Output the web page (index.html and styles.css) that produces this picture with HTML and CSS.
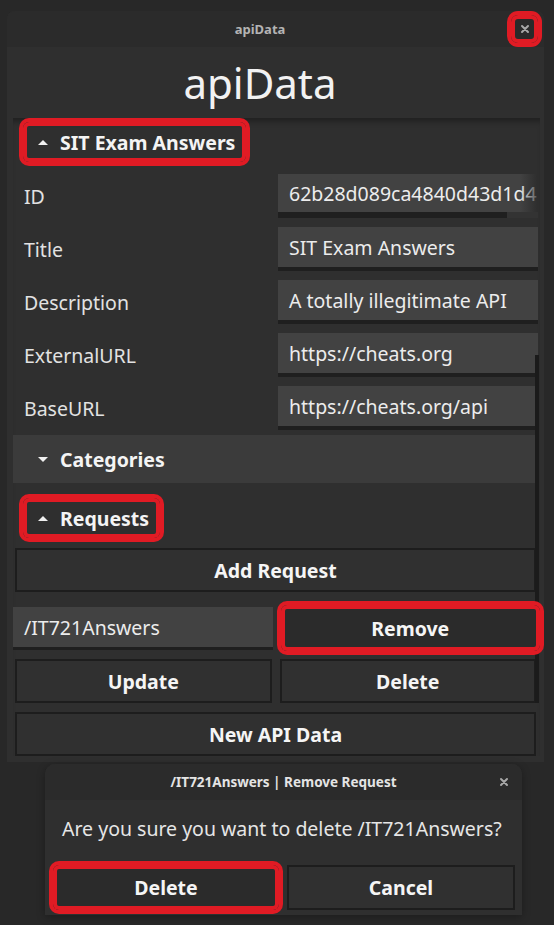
FILE: index.html
```html
<!DOCTYPE html>
<html>
<head>
<meta charset="utf-8">
<title>apiData</title>
<link rel="stylesheet" href="styles.css">
</head>
<body>
<div class="window">
  <div class="titlebar">
    <span class="win-title">apiData</span>
    <span class="close-btn ring-small"><svg width="10" height="10" viewBox="0 0 10 10"><path d="M2 2 L8 8 M8 2 L2 8" stroke="#a8a8a8" stroke-width="2" stroke-linecap="round"/></svg></span>
  </div>
  <div class="content">
    <h1 class="heading">apiData</h1>
    <div class="scroller">
      <div class="section-header">
        <span class="hdr-box ring"><span class="tri up"></span>SIT Exam Answers</span>
      </div>
      <div class="form">
        <div class="label">ID</div>
        <div class="field field-id"><span>62b28d089ca4840d43d1d4</span></div>
        <div class="label">Title</div>
        <div class="field">SIT Exam Answers</div>
        <div class="label">Description</div>
        <div class="field">A totally illegitimate API</div>
        <div class="label">ExternalURL</div>
        <div class="field">https://cheats.org</div>
        <div class="label">BaseURL</div>
        <div class="field">https://cheats.org/api</div>
      </div>
      <div class="section-header hovered">
        <span class="hdr-box"><span class="tri down"></span>Categories</span>
      </div>
      <div class="section-header req-header">
        <span class="hdr-box ring"><span class="tri up"></span>Requests</span>
      </div>
      <div class="actions">
        <div class="btn">Add Request</div>
        <div class="pair pair-edit">
          <div class="field field-req">/IT721Answers</div>
          <div class="btn ring">Remove</div>
        </div>
        <div class="pair pair-btns">
          <div class="btn">Update</div>
          <div class="btn">Delete</div>
        </div>
        <div class="btn btn-last">New API Data</div>
      </div>
      <div class="thumb"></div>
    </div>
  </div>
</div>
<div class="dialog">
  <div class="dlg-titlebar">
    <span></span>
    <span class="dlg-title">/IT721Answers | Remove Request</span>
    <span class="dlg-close"><svg width="10" height="10" viewBox="0 0 10 10"><path d="M2 2 L8 8 M8 2 L2 8" stroke="#a8a8a8" stroke-width="2" stroke-linecap="round"/></svg></span>
  </div>
  <div class="dlg-body">
    <p class="dlg-text">Are you sure you want to delete /IT721Answers?</p>
    <div class="dlg-buttons">
      <div class="btn ring">Delete</div>
      <div class="btn">Cancel</div>
    </div>
  </div>
</div>
</body>
</html>
```
FILE: styles.css
```css
* { box-sizing: border-box; }
html, body { margin: 0; padding: 0; }
body {
  background: #282828;
  font-family: "Noto Sans", "Open Sans", sans-serif;
  color: #e8e8e8;
  width: 554px;
  height: 925px;
  overflow: hidden;
}

.window {
  margin: 11px 0 0 7px;
  width: 537px;
  background: #2f2f2f;
  border-radius: 8px 8px 0 0;
}

.titlebar {
  height: 36px;
  background: #2b2b2b;
  border-radius: 8px 8px 0 0;
  display: flex;
  align-items: center;
}
.win-title {
  flex: 1;
  text-align: center;
  padding-left: 2px;
  font-size: 13px;
  font-weight: 700;
  color: #b4b4b4;
}
.close-btn {
  width: 27px;
  height: 28px;
  margin-right: 6px;
  display: flex;
  align-items: center;
  justify-content: center;
  background: #2a2a2a;
}
.ring-small {
  border-radius: 7px;
  box-shadow: inset 0 0 0 4px #e01b24, 0 0 0 4px #e01b24;
}

.content {
  padding: 0 4px 6px 6px;
}
.heading {
  margin: 0;
  padding: 7px 33px 7px 0;
  font-size: 42px;
  font-weight: 400;
  line-height: 57px;
  text-align: center;
  color: #f2f2f2;
}

.scroller {
  position: relative;
  box-shadow: inset 0 7px 6px -4px rgba(0, 0, 0, 0.35);
}

.section-header {
  height: 48px;
  display: flex;
  align-items: center;
  font-size: 19.5px;
  font-weight: 700;
  color: #f4f4f4;
}
.hdr-box {
  height: 40px;
  margin-left: 10px;
  padding: 0 11px 0 15px;
  display: flex;
  align-items: center;
  gap: 12px;
}
.ring {
  position: relative;
  z-index: 2;
  border-radius: 6px;
  box-shadow: inset 0 0 0 4px #e01b24, 0 0 0 4px #e01b24;
}
.tri {
  width: 0;
  height: 0;
  border-left: 5px solid transparent;
  border-right: 5px solid transparent;
}
.tri.up { border-bottom: 5px solid #f0f0f0; }
.tri.down { border-top: 5px solid #f0f0f0; }

.hovered {
  background: #3b3b3b;
  margin-top: 5px;
  margin-right: 3px;
}
.req-header {
  margin-top: 11px;
}

.form {
  display: grid;
  grid-template-columns: 265px 260px;
  row-gap: 9px;
  margin-top: 8px;
}
.label {
  align-self: center;
  padding-left: 11px;
  font-size: 19.5px;
  color: #e2e2e2;
}
.field {
  height: 44px;
  background: #424242;
  border-bottom: 4px solid #1f1f1f;
  padding: 0 11px;
  display: flex;
  align-items: center;
  font-size: 19.5px;
  color: #ececec;
  white-space: nowrap;
  overflow: hidden;
}
.field-id {
  position: relative;
  border-bottom-width: 6px;
  border-image: linear-gradient(to right, #1f1f1f 88%, #333 88%) 1;
  border-image-slice: 0 0 1 0;
  border-image-width: 0 0 6px 0;
}
.field-id::after {
  content: "";
  position: absolute;
  right: 0;
  top: 0;
  bottom: 0;
  width: 18px;
  background: linear-gradient(to right, rgba(48, 48, 48, 0), rgba(40, 40, 40, 0.8));
}

.actions {
  margin-top: 6px;
  padding: 0 4px 0 2px;
  display: flex;
  flex-direction: column;
}
.btn {
  height: 44px;
  display: flex;
  align-items: center;
  justify-content: center;
  background: #303030;
  border: 2px solid #1d1d1d;
  font-size: 19.5px;
  font-weight: 700;
  color: #f5f5f5;
}
.btn.ring {
  border: 0;
  border-radius: 6px;
  background: #2b2b2b;
}
.pair {
  display: grid;
  grid-template-columns: 1fr 1fr;
  column-gap: 8px;
}
.pair-edit {
  margin: 13px -4px 0 -2px;
  height: 46px;
}
.pair-edit .btn { height: 46px; }
.field-req {
  height: 43px;
  margin-top: 2px;
  border-bottom-width: 3px;
}
.pair-btns {
  margin-top: 8px;
}
.btn-last {
  margin-top: 9px;
}

.thumb {
  position: absolute;
  z-index: 1;
  right: 1px;
  top: 237px;
  width: 4px;
  height: 348px;
  background: #1b1b1b;
}

.dialog {
  margin: 2px 0 0 45px;
  width: 477px;
  background: #2f2f2f;
  border-radius: 10px 10px 0 0;
  box-shadow: 0 2px 8px rgba(0, 0, 0, 0.3);
}
.dlg-titlebar {
  height: 36px;
  background: #2b2b2b;
  border-radius: 10px 10px 0 0;
  display: grid;
  grid-template-columns: 1fr auto 1fr;
  align-items: center;
}
.dlg-title {
  font-size: 13.5px;
  font-weight: 700;
  color: #e4e4e4;
}
.dlg-close {
  justify-self: end;
  margin-right: 13px;
  display: flex;
}
.dlg-body {
  padding: 14px 7px 5px 8px;
}
.dlg-text {
  margin: 0;
  padding-left: 9px;
  font-size: 19.5px;
  line-height: 30px;
  color: #e6e6e6;
}
.dlg-buttons {
  margin-top: 21px;
  display: grid;
  grid-template-columns: 226px 228px;
  column-gap: 8px;
}
.dlg-buttons .btn { height: 45px; }
```
